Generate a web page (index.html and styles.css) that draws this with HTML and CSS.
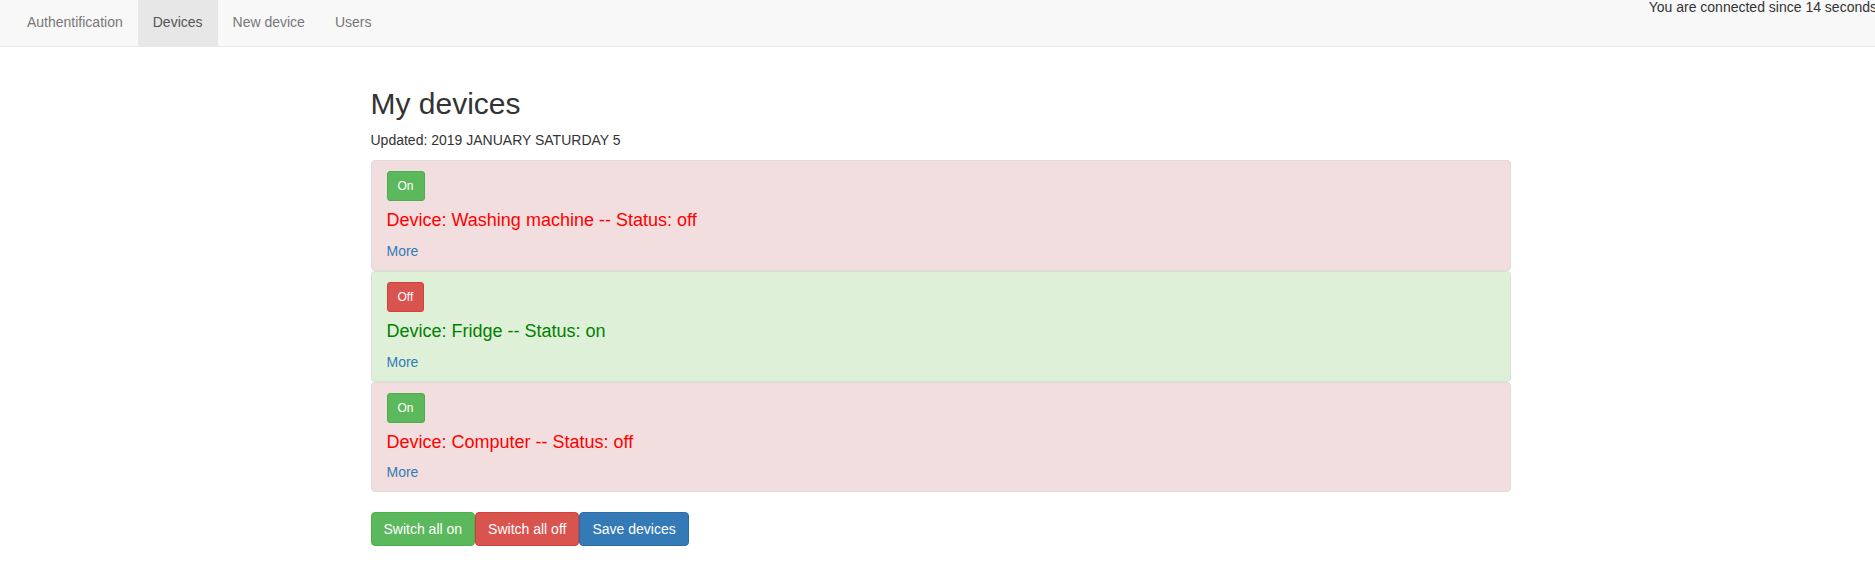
FILE: index.html
```html
<!DOCTYPE html>
<html lang="en">
<head>
<meta charset="utf-8">
<title>My devices</title>
<link rel="stylesheet" href="styles.css">
</head>
<body>
<nav class="navbar">
  <ul class="nav">
    <li><a href="#">Authentification</a></li>
    <li class="active"><a href="#">Devices</a></li>
    <li><a href="#">New device</a></li>
    <li><a href="#">Users</a></li>
  </ul>
  <div class="connected">You are connected since 14 seconds</div>
</nav>
<main class="container">
  <h2 class="title">My devices</h2>
  <p class="updated">Updated: 2019 JANUARY SATURDAY 5</p>
  <div class="devices">
    <div class="device device-off">
      <div><button class="btn btn-sm btn-success">On</button></div>
      <h4 class="device-name">Device: Washing machine -- Status: off</h4>
      <a class="more" href="#">More</a>
    </div>
    <div class="device device-on">
      <div><button class="btn btn-sm btn-danger">Off</button></div>
      <h4 class="device-name">Device: Fridge -- Status: on</h4>
      <a class="more" href="#">More</a>
    </div>
    <div class="device device-off">
      <div><button class="btn btn-sm btn-success">On</button></div>
      <h4 class="device-name">Device: Computer -- Status: off</h4>
      <a class="more" href="#">More</a>
    </div>
  </div>
  <div class="actions">
    <button class="btn btn-success">Switch all on</button><button class="btn btn-danger">Switch all off</button><button class="btn btn-primary">Save devices</button>
  </div>
</main>
</body>
</html>
```

FILE: styles.css
```css
html, body {
  margin: 0;
  padding: 0;
}
body {
  font-family: "Liberation Sans", Arial, Helvetica, sans-serif;
  font-size: 14px;
  line-height: 20px;
  color: #333;
  background: #fff;
  overflow-x: hidden;
}
.navbar {
  display: flex;
  align-items: flex-start;
  background: #f8f8f8;
  border-bottom: 1px solid #e7e7e7;
  margin-bottom: 20px;
  padding-left: 12px;
  overflow: hidden;
  white-space: nowrap;
}
.nav {
  display: flex;
  list-style: none;
  margin: 0;
  padding: 0;
}
.nav a {
  display: block;
  padding: 12px 15px 14px;
  color: #777;
  text-decoration: none;
}
.nav .active a {
  background: #e7e7e7;
  color: #555;
}
.connected {
  margin-left: auto;
  margin-right: -2px;
  line-height: 14px;
  color: #333;
}
.container {
  display: flow-root;
  width: 1140px;
  margin: 0 auto;
  padding: 0 12px 0 18px;
  box-sizing: content-box;
}
.title {
  font-size: 30px;
  font-weight: 500;
  line-height: 33px;
  margin: 20px 0 10px;
}
.updated {
  margin: 0 0 10px;
}
.device {
  border: 1px solid #e0dcdc;
  border-radius: 4px;
  padding: 10px 15px 9px;
}
.device-off {
  background: #f2dede;
  color: #ff0000;
}
.device-on {
  background: #dff0d8;
  color: #008000;
  border-color: #d6e2d0;
}
.device-name {
  font-size: 18px;
  font-weight: 500;
  line-height: 19.8px;
  margin: 10px 0;
}
.more {
  display: block;
  color: #337ab7;
  text-decoration: none;
}
.btn {
  font-family: inherit;
  font-size: 14px;
  line-height: 20px;
  padding: 6px 12px;
  border: 1px solid transparent;
  border-radius: 4px;
  color: #fff;
  cursor: pointer;
  margin: 0;
}
.btn-sm {
  font-size: 12px;
  line-height: 18px;
  padding: 5px 10px;
  border-radius: 3px;
}
.btn-success {
  background: #5cb85c;
  border-color: #4cae4c;
}
.btn-danger {
  background: #d9534f;
  border-color: #d43f3a;
}
.btn-primary {
  background: #337ab7;
  border-color: #2e6da4;
}
.actions {
  display: flex;
  margin-top: 20px;
}
```
